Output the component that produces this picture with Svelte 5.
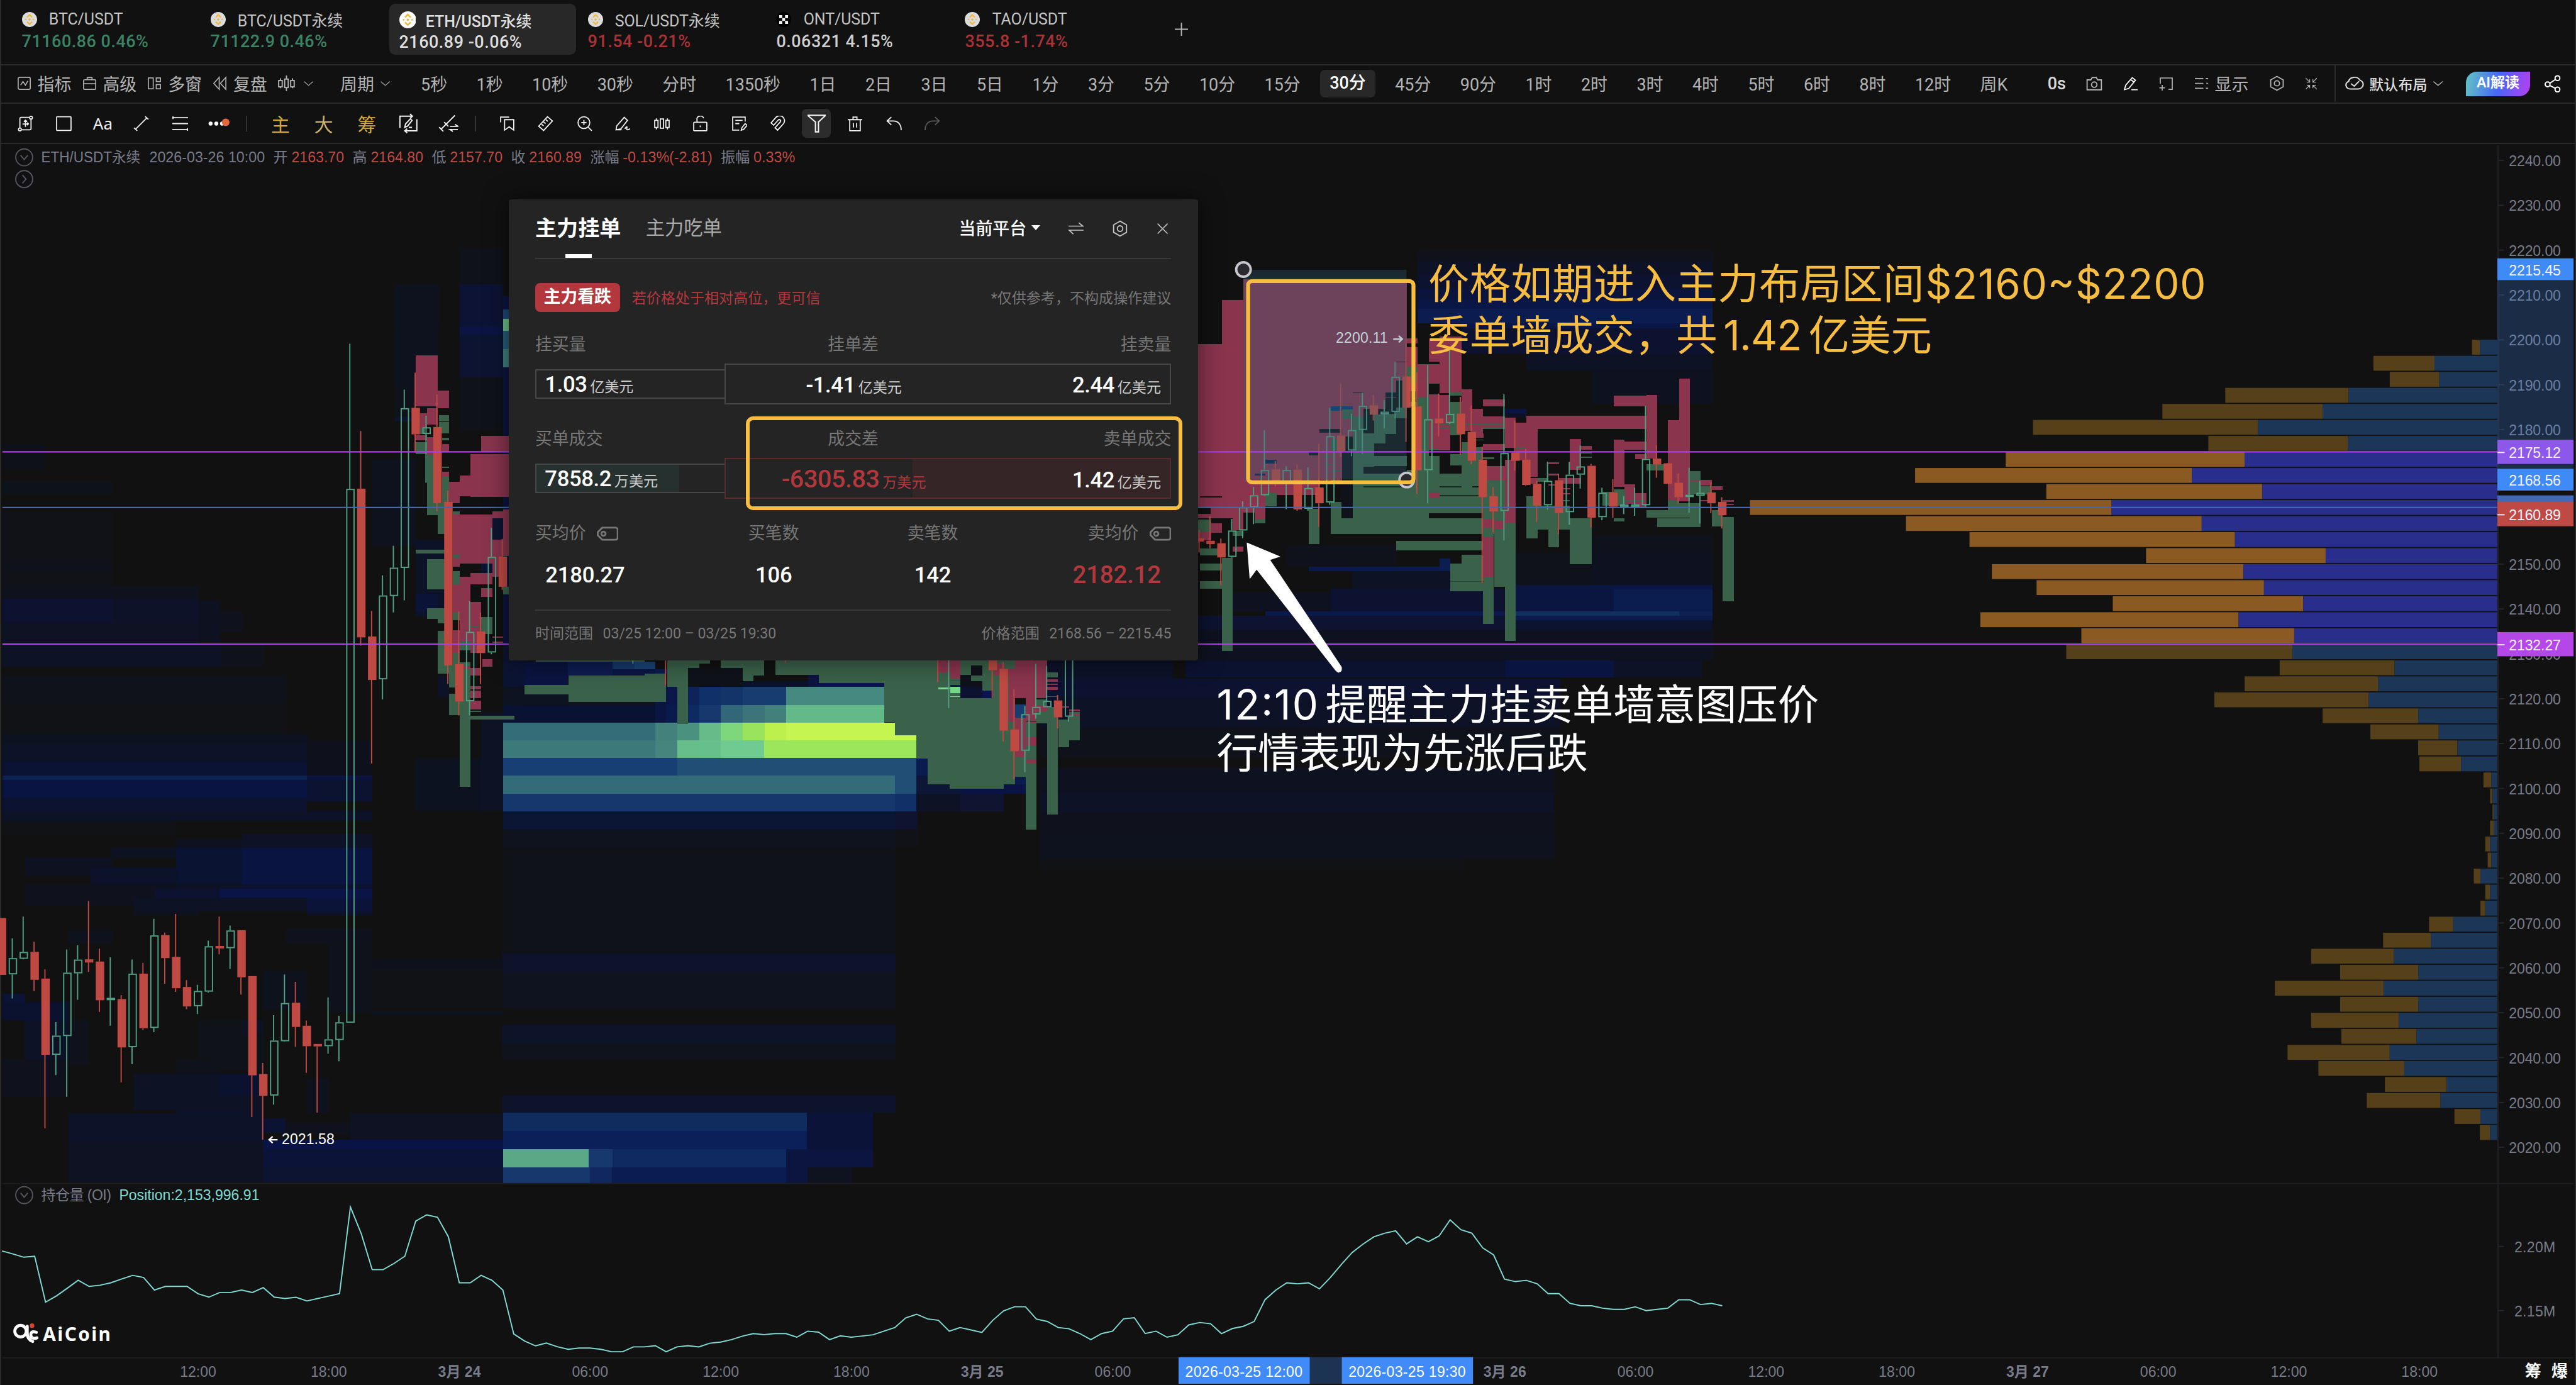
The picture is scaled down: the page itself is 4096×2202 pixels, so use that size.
<script lang="ts">
	type Rect = [number, number, number, number, string?];
	type Tile = { x: number; y: number; sx: number; sy: number; rects: Rect[] };
	type Row = [number, 0 | 1, number, number, number, number];

	const RED = '#8a344e';
	const GREEN = '#3a6149';

	const tabs = [
		{ name: 'BTC/USDT', price: '71160.86 0.46%', tone: 'up', logo: 'bnb' },
		{ name: 'BTC/USDT永续', price: '71122.9 0.46%', tone: 'up', logo: 'bnb' },
		{ name: 'ETH/USDT永续', price: '2160.89 -0.06%', tone: 'on', logo: 'bnb' },
		{ name: 'SOL/USDT永续', price: '91.54 -0.21%', tone: 'down', logo: 'bnb' },
		{ name: 'ONT/USDT', price: '0.06321 4.15%', tone: 'flat', logo: 'okx' },
		{ name: 'TAO/USDT', price: '355.8 -1.74%', tone: 'down', logo: 'bnb' }
	];

	const menus = [
		['indicator', '指标'],
		['toolbox', '高级'],
		['windows', '多窗'],
		['rewind', '复盘']
	];

	const periods =
		'5秒 1秒 10秒 30秒 分时 1350秒 1日 2日 3日 5日 1分 3分 5分 10分 15分 30分 45分 90分 1时 2时 3时 4时 5时 6时 8时 12时 周K'.split(' ');

	const drawTools = ['draw', 'square', 'aa', 'segment', 'levels', 'more'];
	const editTools = [
		'bookmark', 'ruler', 'zoomin', 'brush', 'bars', 'lock',
		'note', 'magnet', 'filter', 'trash', 'undo', 'redo'
	];

	// 24x24 stroke icons
	const icons: Record<string, string> = {
		indicator: '<rect x="2" y="2" width="20" height="20" rx="2.5"/><path d="M6 15l4-6 4 6 4-7"/>',
		toolbox: '<rect x="2" y="6" width="20" height="16" rx="1.5"/><path d="M8 6V2.5h8V6M2 12.500h20"/>',
		windows: '<rect x="2" y="3" width="8" height="18"/><rect x="15" y="3" width="7" height="6"/><rect x="15" y="14" width="7" height="7"/>',
		rewind: '<path d="M11 2L2 12l9 10zM22 2l-9 10 9 10z"/>',
		kline: '<rect x="1" y="8" width="5" height="9"/><rect x="9.500" y="6" width="5" height="12"/><rect x="18" y="8" width="5" height="9"/><path d="M3.500 5v3M3.500 17v2M12 1v5M12 18v5M20.500 5v3M20.500 17v2"/>',
		chevron: '<path d="M2 6.500l10 11 10-11"/>',
		camera: '<path d="M1.500 6.500H7L9 3h6l2 3.500h5.500V21h-21z"/><circle cx="12" cy="13.500" r="4"/>',
		pencil: '<path d="M2 21.500l2-7L14.500 2.500l5 4L9 19.500zM12 5.500l5 4M13 21.500h10"/>',
		select: '<path d="M3 12V3h19v18h-6M6 14v9M1.500 18.500h9"/>',
		list: '<path d="M1 4h14M1 12h14M1 20h14M19 4h4M20 12h3M19 20h4"/>',
		hex: '<path d="M12 1.500l9.500 5.200v10.600L12 22.500l-9.500-5.200V6.700z"/><circle cx="12" cy="12" r="4"/>',
		collapse: '<path d="M1.500 1.500l7 7M9 3.500V9H3.500M22.500 1.500l-7 7M15 3.500V9h5.500M1.500 22.500l7-7M9 20.500V15H3.500M22.500 22.500l-7-7M15 20.500V15h5.500" stroke-width="1.500"/>',
		cloud: '<path d="M7 20a5.500 5.500 0 0 1-2-10.500A7.500 7.500 0 0 1 19 7.500 6.500 6.500 0 0 1 17 20zM8 12.500l4 3.500 6-7"/>',
		share: '<circle cx="5" cy="13" r="3.300"/><circle cx="18.500" cy="4.500" r="3.300"/><circle cx="18.500" cy="20" r="3.300"/><path d="M8 11.500l7.500-5M8 14.500l7.500 4"/>',
		draw: '<path d="M17.500 2.500H5.500a2 2 0 0 0-2 2V18.500M6.500 21.500h12a2 2 0 0 0 2-2V5.500"/><circle cx="20.500" cy="3" r="2.200"/><circle cx="3.500" cy="21" r="2.200"/><path d="M12 7v10M7.500 12.500h9M9.500 9L12 6.800 14.500 9M14.500 10.500l2 2-2 2"/>',
		square: '<rect x="1" y="1.500" width="22" height="21" rx="1"/>',
		segment: '<path d="M3 21L21 3M1 18.500l5 4.500M18 1l5 4.500"/>',
		levels: '<path d="M0 3h24M0 12h24M0 21h24M1 1v4M23 19v4"/>',
		bookmark: '<path d="M2 10V2h13M8 6h14v16l-7-5-7 5z"/>',
		ruler: '<path d="M15 1.500L22.500 8 9 22.500 1.500 16zM12.500 6l3 2.500M9 9.500l3 2.500M6 13l3 2.500"/>',
		zoomin: '<circle cx="11" cy="10.500" r="9"/><path d="M17.500 17.500L23 23M7 10.500h8M11 6.500v8"/>',
		brush: '<path d="M1.500 21.500l1-6L14 2.500l5 4.500L9 20zM1.500 21.500H10M15 20c2-4 4-4 3-1s1 3 5 1"/>',
		bars: '<path d="M1 7h5v11H1zM9.500 5h5v14h-5zM18 7h5v11h-5zM3.500 4v3M3.500 18v3M20.500 4v3M20.500 18v3"/>',
		lock: '<rect x="2" y="10" width="20" height="13" rx="1"/><path d="M7 10V5a5 4 0 0 1 10-1M12 15v2.500"/>',
		note: '<path d="M12 22H2V2h19v7M6 7h11M6 12h6M15 22l1-3.500L21 12l3 2.500-5.500 6.500z"/>',
		magnet: '<path d="M2 11L9 3a7.500 7.500 0 0 1 12 9l-9 10-4-3.500 8-9a2 2 0 0 0-3-3l-7 8zM2 11l4 3.500M8 18.500l4 3"/>',
		filter: '<path d="M0 1h24L14.500 10v13h-4V10z"/>',
		trash: '<path d="M4 6v17h16V6M1 6h22M9 6V2h6v4M9.500 11v7M14.500 11v7"/>',
		undo: '<path d="M8 2L1.500 8 8 14M2 8h9c8 0 12 6 12 14"/>',
		redo: '<path d="M16 2l6.500 6-6.500 6M22 8h-9C5 8 1 14 1 22"/>',
		redraw: '<path d="M1.500 17V3.500H16M14 1l3 2.500L14 6M22.500 7v13.500H8M10.500 18l-3 2.500 3 2.500M7.500 16.500l1-4 6-6 2 2-5.500 6.500zM12.500 16.500h4" stroke-width="1.500"/>',
		measure: '<path d="M3 20L20 2M1 17l5 5.500M7 10.500l5 5.500M14 16h9.500L20 13.500M23.500 20H14l3.500 2.500" stroke-width="1.500"/>',
		swap: '<path d="M1 8.500h21L16 3M23 15H2l6 6"/>',
		close: '<path d="M3 3l18 18M21 3L3 21"/>'
	};

	const PITCH = 18.006;
	const cx = (i: number) => 21.3 + i * PITCH;
	const py = (p: number) => 265 + (2240 - p) * 7.418;

	// [slot, rising, high, body top, body bottom, low]
	function batch(y: number, k: number, rows: Row[]) {
		return rows.map(([i, up, ...v]) => {
			const [h, t, b, l] = v.map((n) => y + n / k);
			return { x: cx(i), up, h, t, b: Math.max(b, t + 4), l };
		});
	}

	const candles = [
		...batch(1340, 2.45, [
			[-1, 0, 436, 436, 666, 666], [0, 1, 518, 598, 664, 762], [1, 1, 430, 573, 601, 603], [2, 0, 532, 573, 686, 732],
			[3, 0, 643, 681, 990, 1288], [4, 1, 857, 912, 990, 1072], [5, 1, 563, 657, 914, 1160], [6, 1, 546, 604, 660, 767],
			[7, 0, 367, 603, 616, 654], [8, 0, 560, 612, 769, 816], [9, 1, 595, 759, 768, 872], [10, 0, 748, 764, 960, 1101],
			[11, 1, 604, 661, 959, 1028], [12, 0, 617, 661, 882, 889], [13, 1, 439, 506, 881, 898], [14, 0, 495, 505, 598, 702],
			[15, 0, 419, 593, 720, 735], [16, 0, 687, 715, 794, 805], [17, 1, 706, 731, 793, 825], [18, 1, 527, 550, 734, 738],
			[19, 0, 430, 549, 559, 583], [20, 1, 466, 486, 558, 642], [21, 0, 485, 485, 676, 746], [22, 0, 671, 671, 1073, 1242],
			[23, 0, 1023, 1068, 1156, 1334], [24, 1, 829, 932, 1155, 1192], [25, 1, 664, 780, 935, 937], [26, 0, 694, 779, 877, 957],
			[27, 0, 851, 872, 955, 1063], [28, 0, 946, 946, 955, 1224], [29, 1, 757, 927, 955, 985], [30, 1, 832, 858, 930, 1016],
			[31, 1, -1891, -1303, 860, 860]
		]),
		...batch(540, 1.96, [
			[32, 0, 338, 525, 1007, 1034], [33, 0, 921, 1004, 1145, 1416], [34, 1, 806, 871, 1143, 1208], [35, 1, 710, 781, 873, 926],
			[36, 1, 204, 264, 782, 887], [37, 0, 149, 263, 349, 408], [38, 1, 288, 326, 348, 506], [39, 0, 220, 325, 572, 598],
			[40, 0, 531, 568, 1098, 1158], [41, 0, 923, 1094, 1215, 1260], [42, 1, 890, 989, 1214, 1260], [43, 0, 927, 988, 1058, 1158],
			[44, 1, 652, 746, 1056, 1062], [45, 0, 688, 745, 843, 853]
		]),
		...batch(1080, 3, [
			[57, 1, 0, 0, 10, 52], [60, 0, 0, 0, 10, 160], [71, 0, 0, 0, 10, 47], [85, 0, 0, 0, 10, 143], [86, 1, 0, 0, 10, 272],
			[90, 0, 0, 0, 84, 222], [91, 0, 42, 78, 384, 437], [92, 0, 180, 378, 486, 624], [93, 1, 262, 302, 484, 590],
			[94, 1, 52, 266, 304, 324], [95, 1, 62, 236, 268, 268], [96, 0, 207, 234, 318, 373], [97, 1, -20, -20, 315, 340]
		]),
		...batch(400, 2.178, [
			[109, 0, 1037, 1067, 1079, 1118], [110, 0, 987, 1076, 1088, 1103], [111, 0, 1068, 1085, 1136, 1236], [112, 1, 997, 1039, 1134, 1137],
			[113, 1, 934, 955, 1039, 1067], [114, 1, 882, 912, 956, 1016], [115, 1, 677, 821, 912, 914], [116, 0, 788, 819, 864, 881],
			[117, 1, 808, 821, 868, 962], [118, 0, 801, 820, 963, 968], [119, 1, 812, 886, 961, 968], [120, 0, 726, 884, 941, 1026],
			[121, 1, 598, 699, 938, 946], [122, 0, 511, 697, 753, 774], [123, 1, 619, 677, 751, 771], [124, 1, 543, 590, 677, 763],
			[125, 0, 551, 588, 622, 643], [126, 1, 569, 611, 621, 672], [127, 1, 433, 485, 612, 636], [128, 0, 348, 484, 597, 720],
			[129, 0, 469, 592, 822, 908], [130, 1, 443, 638, 822, 941], [131, 0, 546, 636, 653, 700], [132, 1, 390, 619, 652, 655],
			[133, 0, 558, 618, 692, 766], [134, 0, 589, 684, 788, 800], [135, 0, 737, 784, 919, 1228], [136, 0, 883, 915, 970, 1046],
			[137, 1, 549, 760, 969, 1075], [138, 0, 643, 758, 788, 823], [139, 0, 745, 784, 875, 877], [140, 0, 860, 871, 950, 1008],
			[141, 1, 791, 860, 948, 964], [142, 0, 834, 858, 976, 1052], [143, 1, 792, 838, 973, 1018], [144, 1, 733, 808, 838, 888],
			[145, 0, 799, 806, 993, 1028], [146, 1, 885, 903, 991, 1002], [147, 0, 854, 902, 953, 994], [148, 1, 915, 945, 954, 980],
			[149, 1, 885, 945, 954, 986], [150, 1, 590, 781, 948, 953], [151, 0, 732, 780, 801, 849], [152, 0, 796, 797, 871, 871],
			[153, 0, 834, 867, 919, 942], [154, 1, 813, 910, 918, 976], [155, 1, 860, 903, 914, 1014], [156, 0, 866, 902, 941, 977],
			[157, 0, 919, 936, 984, 1032]
		])
	];

	// resting liquidity, one tile per stretch of the chart
	const heat: Tile[] = [
		{
			x: 0, y: 0, sx: 1, sy: 1,
			rects: [
				[652, 470, 74, 70, '#0e121e'], [760, 410, 72, 60, '#0f1218'], [760, 470, 72, 70, '#0c1334'],
				[1700, 1092, 240, 30, '#0c1228'], [1720, 1122, 860, 30, '#0c1230'], [1720, 1152, 860, 50, '#0d1226'],
				[1720, 1202, 860, 50, '#0f121a'], [1720, 1270, 850, 40, '#0e1220'], [1720, 1310, 850, 34, '#0d1226'],
				[1720, 1344, 850, 36, '#0f121c'], [1720, 1380, 850, 40, '#0e121e'], [1720, 1420, 700, 20, '#101216'],
				[831, 1400, 650, 180, '#10121a'], [831, 1577, 650, 30, '#0e122a'], [831, 1607, 650, 60, '#0f121f'],
				[831, 1694, 650, 30, '#0d1329'], [831, 1724, 650, 28, '#0e131c'], [831, 1811, 650, 29, '#0d132a'],
				[832, 1840, 502, 30, '#102b5e'], [832, 1870, 502, 30, '#0b2058'], [1334, 1840, 110, 60, '#0b1338'],
				[973, 1900, 40, 30, '#16386c'], [1013, 1900, 287, 30, '#0e2a60'], [1300, 1900, 144, 30, '#0b1540'],
				[832, 1930, 144, 26, '#16386c'], [976, 1930, 36, 26, '#10285f'], [1012, 1930, 288, 26, '#0b1c52'],
				[1300, 1930, 35, 26, '#0b1540'], [1335, 1930, 74, 26, '#0f131f'], [832, 1900, 141, 30, '#5ba886']
			]
		},
		{
			x: 0, y: 540, sx: 1.823, sy: 1.96,
			rects: [
				[7, 380, 130, 82, '#0e1119'], [7, 500, 330, 43, '#0e121b'], [7, 600, 330, 240, '#101218'], [7, 765, 330, 30, '#0f121a'],
				[7, 840, 592, 45, '#0f121c'], [7, 882, 330, 77, '#0c1230'], [337, 882, 262, 77, '#0d1228'], [599, 885, 65, 140, '#0e1220'],
				[664, 925, 68, 65, '#0f121c'], [7, 959, 592, 70, '#0e1222'], [7, 1030, 660, 72, '#0d1226'], [667, 1030, 128, 72, '#0f121a'],
				[7, 1130, 855, 90, '#0f121b'], [7, 1220, 855, 100, '#101216'], [7, 1320, 920, 30, '#0d1220'], [7, 1350, 920, 60, '#0c1228'],
				[7, 1410, 920, 45, '#0b1334'], [7, 1454, 919, 15, '#0c2150'], [926, 1454, 197, 15, '#0b1340'], [7, 1469, 919, 58, '#0a1442'],
				[926, 1340, 197, 114, '#0e111c'], [926, 1469, 197, 70, '#0b1330'], [7, 1527, 919, 42, '#0c1330'], [1190, 0, 132, 205, '#0e121e'],
				[1190, 205, 132, 88, '#0f121a'], [1190, 293, 132, 15, '#0d1430'], [1122, 430, 132, 280, '#0e121e'], [1386, 0, 132, 25, '#0b1444'],
				[1386, 25, 132, 140, '#0c1432'], [1386, 165, 132, 170, '#0f1218'], [1254, 690, 100, 250, '#0c1228'], [1254, 865, 66, 60, '#0b1336'],
				[1484, 620, 33, 180, '#0d1430'], [1451, 760, 33, 70, '#0c1434'], [1320, 1130, 33, 70, '#0d1226'], [1254, 1400, 263, 168, '#0d1220'],
				[1451, 1250, 66, 318, '#0d1224'], [1517, 131, 16, 900, '#0b1440'], [1517, 1030, 51, 130, '#0c1430'], [1517, 1160, 51, 66, '#0d1322'],
				[1517, 1226, 51, 57, '#0b1444'], [1517, -100, 16, 100, '#0b1440'], [1517, -56, 16, 30, '#1d4a78'], [1517, -26, 16, 40, '#6ac085'],
				[1517, 14, 16, 58, '#285c7a'], [1517, 72, 16, 59, '#3f7f7c']
			]
		},
		{
			x: 0, y: 1340, sx: 1.742, sy: 2.45,
			rects: [
				[7, 0, 1066, 41, '#0c1228'], [7, 41, 500, 60, '#101216'], [697, 95, 376, 57, '#0d1226'], [507, 115, 190, 40, '#0e1220'],
				[320, 152, 187, 40, '#0d1222'], [507, 152, 190, 145, '#0b1332'], [697, 152, 376, 147, '#0a1440'], [72, 190, 250, 75, '#0e1220'],
				[260, 230, 250, 70, '#0c122a'], [70, 300, 440, 87, '#0f121c'], [507, 297, 190, 19, '#0d1224'], [697, 299, 376, 17, '#0b1230'],
				[445, 316, 190, 38, '#0c1230'], [634, 316, 439, 38, '#0a1446'],
				[385, 354, 500, 55, '#0d1224'], [885, 354, 188, 55, '#0b133a'], [385, 409, 185, 18, '#0f121c'], [885, 409, 188, 18, '#0d1228'],
				[822, 480, 251, 60, '#0f121c'], [948, 540, 125, 280, '#0f121a'], [197, 485, 125, 55, '#0e121c'], [7, 742, 65, 35, '#0b1336'],
				[7, 777, 190, 73, '#0b1230'], [70, 850, 127, 160, '#0d1226'], [197, 850, 60, 180, '#0f121a'], [7, 1010, 190, 150, '#0f121c'],
				[1073, 600, 377, 40, '#0e111c'], [1073, 640, 377, 160, '#101216'], [1073, 812, 377, 20, '#0e1320'], [570, 850, 190, 200, '#0f1218'],
				[697, 850, 62, 60, '#0e1224'], [760, 650, 125, 160, '#0e121c'], [507, 1010, 125, 60, '#0f121a'], [385, 1065, 375, 150, '#0d1224'],
				[632, 1065, 128, 90, '#0b1230'], [197, 1228, 310, 110, '#0c1228'], [507, 1215, 253, 123, '#0c1228'], [197, 1338, 563, 170, '#0e1222'],
				[885, 1085, 63, 143, '#0f121c'], [760, 1246, 62, 60, '#0c1332'], [822, 1265, 186, 45, '#0f121c'], [1010, 1228, 440, 106, '#0e1222'],
				[760, 1334, 690, 38, '#0a1444'], [760, 1372, 690, 70, '#0b1438'], [760, 1442, 690, 66, '#0c1432'], [1450, 75, 118, 75, '#0e131e']
			]
		},
		{
			x: 820, y: 1080, sx: 1.568, sy: 3,
			rects: [
				[19, 36, 56, 132, '#0c1434'], [75, 42, 112, 120, '#0b1440'], [187, 42, 115, 70, '#0d1c50'], [302, 42, 57, 36, '#15376c'],
				[359, 42, 55, 36, '#1a4477'], [302, 78, 112, 33, '#0b1745'], [414, 78, 30, 24, '#0b1d50'], [19, 168, 170, 87, '#0e1322'],
				[188, 242, 226, 14, '#0f131e'], [442, 168, 28, 88, '#0a1748'], [499, 168, 28, 88, '#0d235a'], [527, 168, 56, 88, '#10306a'],
				[583, 168, 57, 88, '#133469'], [640, 168, 113, 88, '#173c70'], [753, 168, 255, 88, '#458980'], [19, 256, 395, 88, '#0a1234'],
				[414, 242, 28, 102, '#0a1542'], [442, 256, 28, 88, '#0b1a4c'], [499, 256, 28, 88, '#0e2a62'], [527, 256, 56, 88, '#16386c'],
				[583, 256, 57, 88, '#326779'], [640, 256, 57, 88, '#3d7479'], [697, 256, 56, 88, '#42807c'], [753, 256, 254, 88, '#63b988'],
				[19, 344, 395, 88, '#346c78'], [414, 344, 56, 88, '#43827c'], [470, 344, 57, 88, '#4a927f'], [527, 344, 56, 88, '#66bb88'],
				[583, 344, 57, 88, '#7fd77c'], [640, 344, 57, 88, '#99e45c'], [697, 344, 56, 88, '#bdf04c'], [753, 344, 282, 88, '#c5f551'],
				[1035, 408, 56, 24, '#c5f551'], [19, 432, 395, 88, '#3c797a'], [414, 432, 56, 88, '#45857d'], [470, 432, 57, 88, '#67be8a'],
				[527, 432, 56, 88, '#66c08c'], [583, 432, 113, 88, '#70cb90'], [696, 432, 395, 88, '#9ce65c'], [19, 520, 451, 88, '#183f73'],
				[470, 520, 621, 88, '#204e75'], [1091, 520, 29, 88, '#0a1b50'], [19, 608, 1016, 88, '#336c78'], [1035, 608, 56, 88, '#204e75'],
				[1091, 608, 114, 88, '#0c1636'], [1205, 650, 170, 46, '#0a1444'], [1346, 607, 28, 43, '#0a1a50'], [19, 696, 1016, 88, '#15376c'],
				[1035, 696, 56, 88, '#123068'], [1091, 696, 114, 88, '#0d1324'], [1205, 696, 112, 88, '#0f1430'], [19, 784, 1016, 90, '#0a1634'],
				[1035, 784, 58, 90, '#0f1330'], [19, 874, 1016, 86, '#0f131e'], [1035, 874, 60, 86, '#101218'], [1096, 784, 278, 176, '#111'],
				[1317, 696, 57, 88, '#111'], [640, 140, 200, 28, '#0c122c'],
				[499, 72, 141, 96, '#10121a'], [809, 108, 28, 60, '#0b1340'], [837, 148, 170, 20, '#0b1450']
			]
		},
		{
			x: 1960, y: 400, sx: 1.6505, sy: 2.178,
			rects: [
				[635, 28, 805, 40, '#0f121a'], [635, 68, 805, 50, '#0d1226'], [635, 118, 805, 50, '#0c1230'], [635, 168, 805, 42, '#0a143c'],
				[635, 210, 805, 30, '#0a1746'], [635, 240, 805, 52, '#0b1c50'], [754, 292, 686, 20, '#0a1645'], [754, 312, 686, 90, '#0c1230'],
				[932, 402, 508, 60, '#0d1224'], [1110, 462, 330, 121, '#0e1220'], [872, 600, 60, 16, '#0a1442'], [872, 616, 60, 16, '#0d1224'],
				[1110, 1055, 330, 65, '#0f121a'], [1110, 1120, 330, 115, '#0e1220'],
				[902, 1120, 208, 115, '#0f121a'], [278, 1090, 300, 80, '#0f121a'], [338, 1170, 386, 16, '#0b1a4a'], [457, 1186, 267, 62, '#0d1224'],
				[694, 1140, 30, 44, '#0b1e50'], [398, 1248, 505, 82, '#0c1230'], [100, 1262, 298, 68, '#0e1220'], [902, 1235, 268, 95, '#0a1540'],
				[1170, 1235, 270, 15, '#0a1646'], [1170, 1250, 270, 80, '#0b1c4e'], [902, 1330, 446, 17, '#12305f'], [1348, 1330, 92, 17, '#0d2152'],
				[219, 1330, 683, 17, '#0b184a'], [35, 1347, 867, 50, '#0d1330'], [902, 1347, 538, 15, '#0b1b4c'], [902, 1362, 538, 35, '#0c1330'],
				[35, 1397, 1405, 110, '#0e1220'], [872, 1507, 298, 61, '#0a1440'], [0, 1507, 872, 61, '#0b1230'], [1170, 1507, 240, 61, '#0d1226']
			]
		}
	];

	// filled / pulled large orders
	const walls: Tile[] = [
		{
			x: 0, y: 540, sx: 1.823, sy: 1.96,
			rects: [
				[1254, 93, 66, 165, RED], [1320, 208, 33, 57, RED], [1287, 264, 33, 53, RED], [1267, 280, 20, 50, RED], [1254, 352, 33, 16, RED],
				[1287, 357, 33, 60, RED], [1333, 380, 20, 25, RED], [1333, 470, 20, 16, RED], [1353, 502, 33, 70, RED], [1386, 482, 32, 68, RED],
				[1418, 414, 115, 137, RED], [1451, 353, 82, 51, RED], [1366, 609, 118, 158, RED], [1484, 598, 33, 24, RED], [1517, 593, 16, 150, RED],
				[1484, 690, 33, 120, RED], [1366, 752, 20, 26, RED], [1386, 810, 32, 210, RED], [1366, 835, 20, 92, RED], [1418, 798, 66, 37, RED],
				[1451, 848, 33, 27, RED], [1418, 893, 33, 164, RED], [1366, 984, 20, 74, RED], [1484, 1004, 33, 4, RED], [1484, 1021, 33, 4, RED],
				[1454, 1078, 30, 24, RED], [1418, 1107, 33, 24, RED], [1418, 1166, 33, 10, RED], [1418, 1180, 33, 23, RED], [1418, 1212, 33, 29, RED],
				[1254, 374, 33, 40, GREEN], [1267, 330, 20, 18, GREEN], [1324, 287, 29, 20, GREEN], [1324, 310, 29, 35, GREEN], [1333, 360, 20, 8, GREEN],
				[1333, 453, 20, 4, GREEN], [1287, 417, 33, 193, GREEN], [1333, 486, 20, 186, GREEN], [1320, 572, 33, 100, GREEN], [1366, 598, 20, 11, GREEN],
				[1254, 723, 99, 13, GREEN], [1287, 753, 66, 98, GREEN], [1366, 739, 20, 13, GREEN], [1366, 793, 20, 43, GREEN], [1287, 912, 60, 36, GREEN],
				[1320, 948, 30, 14, GREEN], [1366, 927, 20, 25, GREEN], [1320, 985, 33, 140, GREEN], [1366, 1058, 20, 112, GREEN], [1353, 1098, 13, 72, GREEN],
				[1353, 1189, 33, 71, GREEN], [1386, 1087, 32, 405, GREEN], [1386, 1021, 32, 28, GREEN], [1451, 942, 33, 55, GREEN], [1418, 970, 33, 4, GREEN],
				[1418, 1244, 33, 5, GREEN], [1418, 1262, 132, 12, GREEN], [1398, 1100, 20, 10, RED], [1517, 843, 16, 24, GREEN]
			]
		},
		{
			x: 820, y: 1080, sx: 1.568, sy: 3,
			rects: [
				[103, 36, 283, 6, GREEN], [75, 156, 113, 48, GREEN], [188, 111, 254, 131, GREEN], [386, 100, 56, 40, GREEN], [444, 36, 55, 132, GREEN],
				[470, 168, 29, 183, GREEN], [499, 36, 28, 36, GREEN], [527, 36, 28, 15, GREEN], [583, 36, 58, 36, GREEN], [641, 36, 27, 102, GREEN],
				[668, 36, 28, 76, GREEN], [725, 36, 112, 72, GREEN], [837, 36, 170, 112, GREEN], [1007, 36, 28, 304, GREEN], [1035, 36, 56, 372, GREEN],
				[1091, 36, 29, 485, GREEN], [1120, 36, 56, 614, GREEN], [1176, 36, 141, 636, GREEN], [1317, 36, 29, 614, GREEN], [1346, 320, 28, 293, GREEN],
				[1374, 340, 28, 535, GREEN], [1402, 228, 28, 121, GREEN], [1430, 268, 28, 532, GREEN], [1459, 328, 28, 139, GREEN], [1487, 290, 28, 142, GREEN],
				[1430, 96, 28, 25, GREEN], [1430, 212, 28, 5, GREEN], [1148, 36, 30, 58, RED], [1178, 36, 27, 90, RED], [1292, 52, 26, 60, RED],
				[1317, 76, 29, 36, RED], [1330, 112, 16, 230, RED], [1346, 36, 84, 186, RED], [1374, 222, 28, 112, RED], [1346, 320, 28, 194, RED],
				[1376, 414, 26, 42, RED], [1376, 527, 26, 18, RED], [1374, 339, 28, 6, RED], [1430, 128, 28, 15, RED], [1430, 152, 28, 6, RED],
				[1430, 168, 28, 15, RED], [1402, 258, 28, 30, RED], [1466, 264, 20, 6, RED], [1487, 279, 28, 10, RED], [1487, 305, 28, 6, RED],
				[1346, 222, 28, 33, '#111'], [1346, 255, 28, 66, '#163c70'], [1205, 106, 27, 62, '#10121a'], [1232, 60, 29, 52, '#10121a'],
				[1232, 140, 29, 28, '#10121a'], [1205, 168, 56, 54, '#0c1230'], [1261, 186, 28, 36, '#0a1450'], [1178, 131, 27, 4, '#1d4a78'],
				[1178, 158, 27, 9, '#0a1c55'], [1148, 170, 28, 8, '#72d68b'], [1178, 168, 27, 30, '#72d68b'], [1178, 212, 27, 5, '#72d68b']
			]
		},
		{
			x: 1960, y: 400, sx: 1.6505, sy: 2.178,
			rects: [
				[35, 367, 65, 590, RED], [100, 208, 59, 787, RED], [35, 978, 35, 17, RED], [70, 957, 30, 38, RED], [70, 1014, 30, 34, RED],
				[130, 995, 29, 43, RED], [159, 134, 446, 366, RED], [159, 500, 416, 60, RED], [159, 560, 387, 40, RED], [159, 600, 327, 40, RED],
				[159, 640, 298, 60, RED], [159, 700, 239, 60, RED], [159, 760, 239, 96, RED], [159, 856, 60, 118, RED], [189, 974, 30, 28, RED],
				[219, 856, 150, 55, RED], [130, 1098, 29, 16, RED], [35, 1042, 36, 32, RED], [398, 700, 30, 160, RED],
				[605, 348, 30, 100, RED], [635, 440, 60, 120, RED], [665, 348, 89, 82, RED], [694, 340, 60, 205, RED],
				[665, 550, 59, 200, RED], [754, 530, 30, 150, RED], [784, 601, 29, 90, RED], [813, 566, 59, 25, RED], [813, 629, 59, 44, RED],
				[813, 727, 60, 23, RED], [872, 632, 30, 110, RED], [872, 785, 30, 227, RED], [902, 651, 31, 135, RED], [932, 625, 357, 48, RED],
				[932, 673, 30, 172, RED], [1259, 552, 30, 228, RED], [1170, 553, 90, 38, RED], [1050, 710, 30, 110, RED], [1080, 735, 30, 14, RED],
				[1170, 712, 29, 170, RED], [1199, 719, 60, 30, RED], [1229, 764, 30, 17, RED], [1318, 641, 30, 160, RED], [1348, 493, 30, 440, RED],
				[1318, 800, 30, 130, RED], [1199, 872, 30, 70, RED], [1229, 905, 30, 50, RED], [813, 808, 60, 55, RED], [992, 793, 29, 8, RED],
				[992, 835, 29, 6, RED], [1021, 850, 60, 20, RED], [932, 850, 30, 20, RED], [1021, 886, 30, 5, RED], [1021, 905, 30, 4, RED],
				[1407, 857, 30, 20, RED], [1437, 880, 30, 14, RED], [1467, 930, 30, 6, RED], [1467, 943, 30, 5, RED], [1467, 1006, 30, 6, RED],
				[784, 690, 30, 14, RED],
				[398, 996, 474, 56, GREEN], [457, 835, 208, 161, GREEN], [665, 835, 148, 142, GREEN], [605, 448, 30, 60, GREEN], [635, 560, 30, 275, GREEN],
				[605, 820, 60, 20, GREEN], [665, 770, 29, 65, GREEN], [724, 577, 30, 118, GREEN], [724, 765, 30, 40, GREEN], [754, 722, 30, 114, GREEN],
				[784, 740, 29, 100, GREEN], [724, 543, 30, 10, GREEN], [813, 860, 30, 140, GREEN], [843, 858, 29, 145, GREEN], [398, 935, 29, 62, GREEN],
				[338, 960, 29, 128, GREEN], [219, 905, 30, 46, GREEN], [189, 1000, 30, 13, GREEN], [872, 1012, 30, 425, GREEN], [813, 1029, 29, 346, GREEN],
				[843, 1033, 30, 210, GREEN], [575, 1077, 238, 34, GREEN], [754, 1126, 60, 31, GREEN], [724, 1158, 90, 99, GREEN], [932, 915, 30, 152, GREEN],
				[962, 950, 88, 85, GREEN], [992, 1035, 29, 65, GREEN], [1050, 995, 60, 166, GREEN], [962, 850, 30, 14, GREEN], [962, 950, 30, 14, GREEN],
				[1170, 890, 30, 60, GREEN], [1170, 995, 29, 12, GREEN], [1259, 965, 119, 28, GREEN], [1289, 996, 118, 30, GREEN], [1259, 800, 60, 22, GREEN],
				[1318, 930, 30, 40, GREEN], [1348, 940, 30, 30, GREEN], [1378, 825, 29, 85, GREEN], [1378, 940, 29, 54, GREEN], [1407, 880, 30, 30, GREEN],
				[1437, 965, 30, 60, GREEN], [1467, 990, 30, 305, GREEN], [100, 1137, 29, 335, GREEN], [41, 1103, 59, 26, GREEN], [41, 1158, 59, 26, GREEN],
				[41, 1222, 59, 26, GREEN], [35, 1000, 36, 42, GREEN], [1080, 755, 30, 6, GREEN], [1080, 772, 30, 5, GREEN], [130, 1040, 29, 18, GREEN],
				[1139, 900, 30, 50, GREEN], [813, 1062, 29, 143, RED], [813, 1000, 29, 29, RED], [843, 1003, 29, 30, RED], [843, 820, 30, 38, RED],
				[665, 903, 29, 20, RED], [398, 592, 59, 16, '#0b3a7a'], [428, 604, 29, 32, GREEN], [457, 628, 29, 230, GREEN], [486, 690, 30, 120, GREEN],
				[516, 622, 30, 103, GREEN], [546, 620, 29, 72, GREEN], [575, 596, 30, 38, GREEN], [516, 770, 89, 36, GREEN], [367, 673, 60, 14, '#10121a'],
				[338, 758, 29, 10, '#10121a'], [428, 756, 29, 240, '#10121a'], [546, 543, 29, 14, '#0c1220'], [219, 785, 30, 12, '#0b1f50'],
				[189, 835, 30, 6, '#0b1f50'], [41, 915, 59, 6, '#111'], [457, 543, 30, 2, '#111'], [575, 430, 30, 3, '#111'], [784, 880, 29, 4, '#0e1a18'],
				[486, 880, 120, 3, '#1a2c24'], [694, 912, 119, 3, '#1a2c24'], [694, 880, 60, 3, '#1a2c24'], [724, 1222, 90, 2, '#2b4a38'],
				[665, 430, 29, 9, '#111'], [665, 510, 29, 38, '#111'], [605, 366, 30, 13, '#111'], [635, 503, 30, 3, GREEN], [605, 508, 30, 30, RED],
				[605, 576, 30, 16, GREEN], [398, 710, 29, 40, GREEN], [378, 770, 20, 6, GREEN], [378, 800, 20, 5, GREEN], [398, 820, 29, 5, GREEN],
				[754, 655, 59, 5, GREEN], [784, 711, 29, 3, GREEN], [813, 656, 59, 3, GREEN], [813, 668, 59, 3, GREEN], [694, 655, 30, 4, GREEN],
				[694, 668, 60, 4, GREEN], [665, 745, 29, 4, GREEN], [902, 738, 30, 8, GREEN], [813, 775, 30, 6, GREEN], [992, 872, 29, 5, RED],
				[1021, 930, 29, 4, GREEN], [1139, 924, 30, 4, RED], [1199, 930, 60, 4, GREEN], [1378, 856, 29, 5, RED], [1407, 930, 30, 4, RED]
			]
		}
	];

	// [total, sell share], widths in px from the price axis
	const profile = [
		[42, 29], [205, 104], [178, 96], [450, 246], [554, 289], [768, 396], [478, 247], [813, 418], [963, 505], [746, 389],
		[1236, 638], [978, 489], [873, 434], [581, 284], [836, 420], [762, 386], [636, 321], [855, 428], [688, 336], [713, 339],
		[360, 170], [418, 197], [468, 213], [289, 131], [210, 97], [131, 66], [129, 60], [23, 10], [12, 8], [8, 6],
		[12, 6], [20, 12], [16, 10], [39, 28], [20, 12], [28, 20], [113, 73], [189, 110], [308, 171], [260, 131],
		[368, 188], [260, 131], [308, 163], [258, 134], [347, 178], [296, 154], [186, 84], [216, 94], [71, 28], [29, 12]
	];
	const inValueArea = (i: number) => i > 6 && i < 19;

	const openInterest = [
		385, 400, 416, 411, 639, 608, 570, 530, 561, 555, 543, 524, 506, 517, 579, 561, 561, 561, 597, 614, 591, 591, 579, 591,
		567, 614, 621, 615, 633, 621, 609, 597, 167, 300, 478, 478, 447, 411, 237, 206, 218, 315, 543, 543, 506, 531, 579, 797,
		832, 856, 842, 860, 873, 867, 867, 873, 885, 885, 861, 861, 855, 885, 861, 855, 861, 843, 837, 825, 808, 795, 800, 795,
		795, 813, 783, 788, 825, 806, 813, 807, 801, 783, 765, 717, 699, 722, 729, 783, 765, 777, 789, 729, 682, 662, 662, 723,
		735, 765, 771, 795, 825, 795, 783, 722, 716, 795, 783, 813, 801, 752, 740, 746, 795, 770, 759, 735, 627, 579, 543, 548,
		543, 573, 517, 453, 393, 351, 315, 297, 285, 350, 315, 339, 310, 231, 280, 297, 370, 405, 525, 537, 531, 548, 597, 597,
		645, 657, 657, 669, 675, 675, 662, 681, 675, 669, 627, 627, 651, 645, 657
	];
	const oiLine = openInterest.map((v, i) => `${cx(i - 1).toFixed(1)},${(1940 + v / 3).toFixed(1)}`).join(' ');

	const prices = Array.from({ length: 23 }, (_, i) => 2240 - i * 10);
	const times = [
		'12:00', '18:00', '3月 24', '06:00', '12:00', '18:00', '3月 25', '06:00', '', '',
		'3月 26', '06:00', '12:00', '18:00', '3月 27', '06:00', '12:00', '18:00'
	];

	const tags = [
		{ y: 427, h: 36, fill: '#3e8bf8', text: '2215.45', tick: false },
		{ y: 727, h: 40, fill: '#8d58ea', text: '2175.12', tick: true },
		{ y: 775, h: 36, fill: '#3e8bf8', text: '2168.56', tick: false },
		{ y: 830, h: 40, fill: '#bf4a43', text: '2160.89', tick: true },
		{ y: 1045, h: 40, fill: '#b547e8', text: '2132.27', tick: true }
	];

	// [x, width, text, is value]
	const legend: [number, number, string, boolean][] = [
		[68, 164, 'ETH/USDT永续', false], [247, 191, '2026-03-26 10:00', false],
		[452, 24, '开', false], [482, 87, '2163.70', true], [583, 24, '高', false], [613, 87, '2164.80', true],
		[714, 24, '低', false], [744, 87, '2157.70', true], [845, 24, '收', false], [875, 87, '2160.89', true],
		[976, 48, '涨幅', false], [1030, 148, '-0.13%(-2.81)', true], [1192, 48, '振幅', false], [1246, 69, '0.33%', true]
	];
</script>

{#snippet icon(name: string, size: number, height = size)}
	<svg
		class="icon"
		style="width: {size}px; height: {height}px"
		viewBox="0 0 24 24"
		preserveAspectRatio="none"
		fill="none"
		stroke="currentColor"
		stroke-width="1.7"
	>
		{@html icons[name]}
	</svg>
{/snippet}

{#snippet tile(t: Tile)}
	<g transform="translate({t.x} {t.y}) scale({1 / t.sx} {1 / t.sy})" shape-rendering="crispEdges">
		{#each t.rects as [x, y, w, h, fill]}
			<rect {x} {y} width={w} height={h} {fill} />
		{/each}
	</g>
{/snippet}

{#snippet tagIcon()}
	<svg class="price-tag" viewBox="0 0 37 24">
		<path d="M10 2h22a3.500 3.500 0 0 1 3.500 3.500v13A3.500 3.500 0 0 1 32 22H10L2.500 14.500v-5z" />
		<circle cx="12" cy="12" r="3.500" />
	</svg>
{/snippet}

<div class="app">
	<header class="tabs">
		{#each tabs as tab}
			<div class="tab" class:active={tab.tone === 'on'}>
				<div class="pair">
					<svg class="logo" viewBox="0 0 24 24">
						{#if tab.logo === 'bnb'}
							<circle cx="12" cy="12" r="12" fill={tab.tone === 'on' ? '#fff' : '#dcdcdc'} />
							<g fill="none" stroke="#efb83c" stroke-width="2.2">
								<path d="M8 8.500l4-4 4 4M8 15.500l4 4 4-4" />
							</g>
							<path d="M12 9.800l2.200 2.200-2.200 2.200L9.800 12zM6 10.400L7.600 12 6 13.600 4.400 12zM18 10.400l1.600 1.600-1.600 1.600-1.600-1.600z" fill="#efb83c" />
						{:else}
							<circle cx="12" cy="12" r="12" fill="#000" />
							<path d="M5 5h4.700v4.700H5zM14.300 5H19v4.700h-4.700zM9.700 9.700h4.600v4.600H9.700zM5 14.300h4.700V19H5zM14.300 14.300H19V19h-4.700z" fill="#fff" />
						{/if}
					</svg>
					<span>{tab.name}</span>
				</div>
				<div class="quote {tab.tone}">{tab.price}</div>
			</div>
		{/each}
		<svg class="plus" viewBox="0 0 22 22"><path d="M11 0v22M0 11h22" /></svg>
	</header>

	<nav class="periods">
		<div class="menus">
			{#each menus as [name, label]}
				<div class="menu">{@render icon(name, 24)}<span>{label}</span></div>
			{/each}
			<div class="menu kline">{@render icon('kline', 28)}{@render icon('chevron', 18, 14)}</div>
			<div class="menu cycle"><span>周期</span>{@render icon('chevron', 18, 14)}</div>
		</div>
		<div class="list">
			{#each periods as p}
				<span class:current={p === '30分'}>{p}</span>
			{/each}
		</div>
		<div class="actions">
			<b>0s</b>
			{@render icon('camera', 27)}
			<span class="bright">{@render icon('pencil', 25)}</span>
			{@render icon('select', 25)}
			<div class="menu">{@render icon('list', 24)}<span>显示</span></div>
			{@render icon('hex', 26)}
			{@render icon('collapse', 21)}
		</div>
		<div class="layout">
			{@render icon('cloud', 32, 28)}<span>默认布局</span>{@render icon('chevron', 18, 14)}
			<div class="ai">AI解读</div>
			<span class="bright">{@render icon('share', 29)}</span>
		</div>
	</nav>

	<div class="tools">
		<div class="group first">
			{#each drawTools as t}
				<div class="tool">
					{#if t === 'aa'}
						<span class="aa">Aa</span>
					{:else if t === 'more'}
						<svg class="dots" viewBox="0 0 38 26">
							<circle cx="4" cy="13" r="3.300" fill="#fff" />
							<circle cx="13.500" cy="13" r="3.300" fill="#fff" />
							<circle cx="23" cy="13" r="3.300" fill="#fff" />
							<circle cx="29" cy="11" r="6.300" fill="#e5673b" />
						</svg>
					{:else}
						{@render icon(t, 26)}
					{/if}
				</div>
			{/each}
		</div>
		<i class="bar"></i>
		<div class="group marks">
			<span>主</span><span class="pale">大</span><span>筹</span>
			<div class="tool">{@render icon('redraw', 32, 34)}</div>
			<div class="tool">{@render icon('measure', 33, 31)}</div>
		</div>
		<i class="bar second"></i>
		<div class="group">
			{#each editTools as t}
				<div class="tool" class:pressed={t === 'filter'} class:off={t === 'redo'}>{@render icon(t, t === 'filter' ? 30 : 26)}</div>
			{/each}
		</div>
	</div>

	<main class="chart">
		<svg class="canvas" viewBox="0 238 4260 2052">
			{#each heat as t}{@render tile(t)}{/each}
			{#each walls as t}{@render tile(t)}{/each}

			{#each candles as c}
				<g class={c.up ? 'up' : 'down'}>
					<path class="wick" d="M{c.x - 1} {c.h}V{c.t}M{c.x - 1} {c.b}V{Math.max(c.l, c.b)}" />
					{#if c.up}
						<rect class="body" x={c.x - 6} y={c.t + 1} width="12" height={c.b - c.t - 2} />
					{:else}
						<rect class="body" x={c.x - 7} y={c.t} width="14" height={c.b - c.t} />
					{/if}
				</g>
			{/each}

			<rect x="2056" y="446" width="270" height="347" fill="rgba(51, 95, 117, 0.32)" />

			{#each profile as [total, part], i}
				<rect x={4130 - total} y={561.7 + i * 26.5} width={total - part} height="24.600" fill={inValueArea(i) ? '#8a5a22' : '#55401a'} />
				<rect x={4130 - part} y={561.7 + i * 26.5} width={part} height="24.600" fill={inValueArea(i) ? '#292d8b' : '#1b3657'} />
			{/each}

			<path d="M4 747H4130M4 1065H4130" stroke="#a942df" stroke-width="2.200" />
			<path d="M4 839H4130" stroke="#3f69b5" stroke-width="2.200" />

			<g class="label">
				<text x="2209" y="567" fill="#c3d2d8" textLength="86">2200.11</text>
				<path d="M2304 560.500h15M2313 555l6 5.500-6 5.500" stroke="#c3d2d8" fill="none" stroke-width="2.400" />
				<text x="466" y="1892" fill="#fff" textLength="87">2021.58</text>
				<path d="M459 1884.500h-14M451 1879l-6 5.500 6 5.500" stroke="#fff" fill="none" stroke-width="2.400" />
			</g>

			<g fill="#2a2a30" stroke="#c6c6cc" stroke-width="4">
				<circle cx="2056.300" cy="445.500" r="12" />
				<circle cx="2326.300" cy="793.500" r="12" />
			</g>
			<rect x="2064" y="464.500" width="273.500" height="333" rx="7" fill="none" stroke="#f6bd40" stroke-width="6.500" />

			<g class="note" fill="#f6bd40">
				<text x="2362" y="494" textLength="820">价格如期进入主力布局区间</text>
				<text x="3184" y="494" textLength="464">$2160~$2200</text>
				<text x="2362" y="579" textLength="478">委单墙成交，共</text>
				<text x="2850" y="579" textLength="130">1.42</text>
				<text x="2991" y="579" textLength="204">亿美元</text>
			</g>
			<g class="note" fill="#fff">
				<text x="2012" y="1190" textLength="168">12:10</text>
				<text x="2192" y="1190" textLength="816">提醒主力挂卖单墙意图压价</text>
				<text x="2012" y="1270" textLength="614">行情表现为先涨后跌</text>
			</g>
			<path
				transform="translate(1960 400) scale(0.6059 0.4591)"
				d="M168 1082L260 1133L232 1145L427 1530Q430 1550 418 1551Q412 1548 408 1540L195 1180L176 1214z"
				fill="#fff"
			/>

			<!-- legend -->
			<g fill="none" stroke="#55565e" stroke-width="2">
				<circle cx="40" cy="260" r="14" /><path d="M34 256.500l6 7 6-7" />
				<circle cx="40" cy="296" r="14" /><path d="M37 289l6 7-6 7" />
				<circle cx="40" cy="1976" r="14" /><path d="M34 1972.500l6 7 6-7" />
			</g>
			<g class="label">
				{#each legend as [x, w, text, value]}
					<text {x} y="268.500" textLength={w} lengthAdjust="spacingAndGlyphs" fill={value ? '#bf4a43' : '#787b89'}>{text}</text>
				{/each}
				<text x="68" y="1984.500" textLength="116" fill="#787b89">持仓量 (OI)</text>
				<text x="197" y="1984.500" textLength="232" fill="#7fdbd3">Position:2,153,996.91</text>
			</g>

			<!-- open interest -->
			<path d="M4 1957H4256M4 2245H4256" stroke="#1e1e22" stroke-width="2" />
			<polyline points={oiLine} fill="none" stroke="#7fdbd3" stroke-width="2" />
			<g fill="none" stroke="#fff" stroke-width="5" stroke-linecap="round">
				<circle cx="34" cy="2201" r="9.500" />
				<path d="M45 2193v11q0 11 9 14" />
				<path d="M60 2203q-8-3-9 3t5 7q3 0 5-1" />
			</g>
			<circle cx="53" cy="2192" r="3.800" fill="#d8432f" />
			<text class="brand" x="71" y="2217" textLength="112">AiCoin</text>

			<!-- price axis -->
			<path d="M4131 240V2245" stroke="#1f1f26" stroke-width="2.500" />
			<g class="label" fill="#787b89">
				{#each prices as p}
					<path d="M4132 {py(p)}h9" stroke="#26262c" stroke-width="2" />
					<text x="4149" y={py(p) + 9.5} textLength="86">{p}.00</text>
				{/each}
				<path d="M4132 2061h9M4132 2167h9" stroke="#26262c" stroke-width="2" />
				<text x="4158" y="2070.500" textLength="68">2.20M</text>
				<text x="4158" y="2176.500" textLength="68">2.15M</text>
			</g>
			<rect x="4130" y="447" width="126" height="347" fill="rgba(62, 139, 248, 0.23)" />
			<rect x="4130" y="819" width="126" height="14" fill="#4269b3" />
			{#each tags as t}
				<rect x="4130" y={t.y} width="126" height={t.h} fill={t.fill} />
				{#if t.tick}<path d="M4130 {t.y + t.h / 2 + 1}h12" stroke="#f0e8ff" stroke-width="2" />{/if}
				<text class="label" x="4149" y={t.y + t.h / 2 + 10} textLength="86" fill="#f4f2ff">{t.text}</text>
			{/each}

			<!-- time axis -->
			<g class="label" fill="#787b89" text-anchor="middle">
				{#each times as t, i}
					<text x={327.6 + i * 216.1} y="2276.500" class:day={t.includes('月')}>{t}</text>
				{/each}
			</g>
			<rect x="2166" y="2244" width="53" height="44" fill="#1d3354" />
			<rect x="1949" y="2244" width="217" height="44" fill="#418bf8" />
			<rect x="2219" y="2244" width="217" height="44" fill="#418bf8" />
			<g class="label" fill="#fff">
				<text x="1960" y="2276" textLength="194">2026-03-25 12:00</text>
				<text x="2230" y="2276" textLength="194">2026-03-25 19:30</text>
			</g>
			<g class="corner" text-anchor="middle">
				<text x="4189" y="2276">筹</text>
				<text x="4233" y="2276">爆</text>
			</g>
		</svg>

		<section class="panel">
			<div class="head">
				<h2>主力挂单</h2>
				<h3>主力吃单</h3>
				<div class="platform">当前平台<i></i></div>
				{@render icon('swap', 27, 25)}
				{@render icon('hex', 27, 28)}
				{@render icon('close', 22)}
			</div>
			<div class="hint">
				<strong>主力看跌</strong>
				<em>若价格处于相对高位，更可信</em>
				<small>*仅供参考，不构成操作建议</small>
			</div>
			<div class="titles"><span>挂买量</span><span>挂单差</span><span>挂卖量</span></div>
			<div class="pairbox">
				<div class="buy"><b>1.03</b><u>亿美元</u></div>
				<div class="sell">
					<div class="diff"><b>-1.41</b><u>亿美元</u></div>
					<div class="sum"><b>2.44</b><u>亿美元</u></div>
				</div>
			</div>
			<div class="titles deal"><span>买单成交</span><span>成交差</span><span>卖单成交</span></div>
			<div class="pairbox">
				<div class="buy filled"><b>7858.2</b><u>万美元</u></div>
				<div class="sell filled">
					<div class="diff"><b>-6305.83</b><u>万美元</u></div>
					<div class="sum"><b>1.42</b><u>亿美元</u></div>
				</div>
			</div>
			<div class="stats">
				<div><span>买均价 {@render tagIcon()}</span><b>2180.27</b></div>
				<div><span>买笔数</span><b>106</b></div>
				<div><span>卖笔数</span><b>142</b></div>
				<div><span>卖均价 {@render tagIcon()}</span><b class="hot">2182.12</b></div>
			</div>
			<div class="foot">
				<span>时间范围<q>03/25 12:00 – 03/25 19:30</q></span>
				<span>价格范围<q>2168.56 – 2215.45</q></span>
			</div>
			<div class="focus"></div>
		</section>
	</main>
</div>

<style>
	:global(body) {
		background: #111;
		overflow: hidden;
	}
	.app {
		--line: #2a2a2a;
		--grey: #b4b4b4;
		zoom: 0.9615;
		box-sizing: border-box;
		width: 4260px;
		height: 2290px;
		display: flex;
		flex-direction: column;
		position: relative;
		background: #111;
		color: var(--grey);
		font-family: Roboto, 'Noto Sans CJK SC', sans-serif;
		box-shadow: inset 2px 0 #2c2c2c, inset -2px 0 #2c2c2c;
		overflow: hidden;
	}
	.icon {
		display: block;
		flex: none;
	}
	.tabs {
		display: flex;
		box-sizing: border-box;
		height: 108px;
		padding: 6px 0 0 20px;
		gap: 3px;
		border-bottom: 2.1px solid var(--line);
	}
	.tab {
		box-sizing: border-box;
		width: 309px;
		height: 84px;
		padding: 9px 0 0 16px;
		border-radius: 10px;
		color: #c4c4c4;
	}
	.tab.active {
		background: #282828;
		color: #dedede;
		padding-top: 10px;
	}
	.pair {
		display: flex;
		align-items: center;
		gap: 20px;
		height: 34px;
		font-size: 26px;
		letter-spacing: -0.1px;
		white-space: nowrap;
	}
	.logo {
		width: 25px;
		height: 25px;
	}
	.active .pair {
		gap: 16px;
		font-weight: 500;
	}
	.active .logo {
		width: 28px;
		height: 28px;
	}
	.quote {
		height: 36px;
		line-height: 36px;
		margin-top: 2px;
		font-size: 28px;
		font-weight: 500;
		letter-spacing: 0.55px;
		white-space: nowrap;
	}
	.quote.up {
		color: #3c8365;
	}
	.quote.down {
		color: #a93337;
	}
	.quote.flat {
		color: #cfcfcf;
	}
	.plus {
		width: 22px;
		height: 22px;
		margin: 31px 0 0 51px;
		stroke: var(--grey);
		stroke-width: 2;
	}
	.periods {
		display: flex;
		align-items: center;
		box-sizing: border-box;
		height: 64px;
		padding: 0 24px 2px 28px;
		border-bottom: 2.1px solid var(--line);
		font-size: 28px;
		white-space: nowrap;
	}
	.menus {
		display: flex;
		align-items: center;
		width: 668px;
		gap: 18px;
	}
	.menu {
		display: flex;
		align-items: center;
		gap: 10px;
	}
	.kline {
		gap: 14px;
	}
	.cycle {
		margin-left: 25px;
		gap: 10px;
	}
	.list {
		display: flex;
		align-items: center;
		justify-content: space-between;
		width: 2625px;
	}
	.current {
		margin: 0 -16px;
		padding: 0 16px;
		height: 46px;
		line-height: 45px;
		border-radius: 8px;
		background: #282828;
		color: #fff;
		font-weight: 500;
	}
	.actions {
		display: flex;
		align-items: center;
		justify-content: space-between;
		width: 447px;
		margin-left: 66px;
	}
	.actions b {
		color: #d8d8d8;
		font-weight: 500;
	}
	.bright {
		color: #fff;
	}
	.layout {
		display: flex;
		align-items: center;
		flex: 1;
		height: 62px;
		margin-left: 28px;
		padding-left: 14px;
		border-left: 2.1px solid var(--line);
		color: #dcdcdc;
		font-size: 24px;
		gap: 9px;
		font-weight: 500;
	}
	.ai {
		width: 106px;
		height: 40px;
		line-height: 38px;
		margin: 2px 14px 0 28px;
		border-radius: 18px 0 18px 0;
		background: linear-gradient(100deg, #62c6c4, #4668f5 50%, #b83df2);
		color: #fff;
		text-align: center;
		font-weight: 600;
	}
	.tools {
		display: flex;
		align-items: center;
		box-sizing: border-box;
		height: 66px;
		padding-left: 10px;
		border-bottom: 2.1px solid var(--line);
		color: #f2f2f2;
	}
	.group {
		display: flex;
		align-items: center;
	}
	.tool {
		display: flex;
		align-items: center;
		justify-content: center;
		width: 64px;
		height: 48px;
	}
	.first .tool:last-child {
		padding-left: 2px;
		width: 62px;
	}
	.aa {
		font: 27px 'Noto Sans', sans-serif;
	}
	.dots {
		width: 38px;
		height: 26px;
	}
	.bar {
		width: 2px;
		height: 26px;
		margin-left: 13px;
		background: #333;
	}
	.marks {
		margin-left: 19px;
	}
	.marks span {
		width: 71.500px;
		text-align: center;
		font-size: 31px;
		line-height: 40px;
		padding-top: 6px;
		color: #d4a83a;
	}
	.marks .pale {
		color: #c9b266;
	}
	.marks .tool {
		width: 66px;
	}
	.second {
		margin-left: 11px;
		margin-right: 19px;
	}
	.pressed {
		width: 48px;
		margin: 0 8px;
		border-radius: 8px;
		background: #2c2c2c;
	}
	.off {
		color: #5a5a5a;
	}

	.chart {
		position: relative;
		flex: 1;
	}
	.canvas {
		display: block;
		width: 4260px;
		height: 2052px;
	}
	.wick {
		stroke-width: 2;
	}
	.up {
		stroke: #50a083;
		fill: none;
	}
	.up .body {
		stroke-width: 2;
	}
	.down {
		stroke: #bf4a43;
	}
	.down .body {
		fill: #bf4a43;
		stroke: none;
	}
	.label {
		font: 24px 'Liberation Sans', 'Noto Sans CJK SC', sans-serif;
	}
	.day {
		font-weight: bold;
	}
	.note {
		font: 68px Inter, 'Noto Sans CJK SC', sans-serif;
	}
	.brand {
		font: bold 31px 'Noto Sans', sans-serif;
		fill: #fff;
	}
	.corner {
		font: bold 27px 'Noto Sans CJK SC', sans-serif;
		fill: #fff;
	}

	.panel {
		position: absolute;
		left: 841px;
		top: 92px;
		box-sizing: border-box;
		width: 1140px;
		height: 762px;
		padding: 0 44px;
		border-radius: 4px;
		background: #242424;
		box-shadow: 0 0 40px rgba(0, 0, 0, 0.5);
		color: #fff;
		white-space: nowrap;
	}
	.head {
		display: flex;
		align-items: center;
		position: relative;
		height: 96px;
		border-bottom: 2.1px solid #393939;
	}
	.head::after {
		content: '';
		position: absolute;
		left: 50px;
		bottom: 0;
		width: 44px;
		height: 6px;
		background: #fff;
	}
	.head h2 {
		margin: 0;
		font-size: 35.500px;
		font-weight: 600;
		line-height: 92px;
	}
	.head h3 {
		margin: 0 auto 0 41px;
		color: #aaa;
		font-size: 31.500px;
		font-weight: 400;
		line-height: 90px;
	}
	.head .icon {
		color: #c4c4c4;
		margin-left: 46px;
	}
	.head .icon:last-child {
		margin-right: 3px;
	}
	.platform {
		display: flex;
		align-items: center;
		gap: 8px;
		padding-bottom: 3px;
		font-size: 28px;
		font-weight: 500;
	}
	.platform i {
		border: 8px solid transparent;
		border-top: 9px solid #fff;
		border-bottom: 0;
	}
	.hint {
		display: flex;
		align-items: center;
		margin-top: 40px;
		height: 48px;
		font-size: 24px;
	}
	.hint strong {
		width: 140px;
		height: 48px;
		line-height: 46px;
		border-radius: 8px;
		background: #b2383e;
		text-align: center;
		font-size: 28px;
		font-weight: 600;
	}
	.hint em {
		margin: -2px 0 0 20px;
		color: #b2383e;
		font-style: normal;
	}
	.hint small {
		margin: -2px 0 0 auto;
		color: #777;
		font-size: 24px;
	}
	.titles {
		display: grid;
		grid-template-columns: 1fr auto 1fr;
		height: 40px;
		line-height: 40px;
		margin-top: 34px;
		color: #777;
		font-size: 28px;
	}
	.titles span:last-child {
		text-align: right;
	}
	.titles.deal {
		margin-top: 37px;
	}
	.pairbox {
		display: flex;
		align-items: center;
		height: 68px;
		margin-top: 11px;
	}
	.buy,
	.sell,
	.diff,
	.sum {
		display: flex;
		align-items: baseline;
		box-sizing: border-box;
	}
	.buy {
		width: 313px;
		height: 48px;
		padding-left: 14px;
		border: 2.1px solid #474747;
		border-right: 0;
		line-height: 47px;
	}
	.sell {
		position: relative;
		width: 739px;
		height: 68px;
		padding-right: 15px;
		border: 2.1px solid #474747;
		line-height: 67px;
	}
	.diff {
		width: 424px;
		justify-content: center;
	}
	.sum {
		flex: 1;
		justify-content: flex-end;
	}
	.pairbox b {
		font-size: 36px;
		font-weight: 500;
		letter-spacing: -0.4px;
	}
	.pairbox u {
		margin-left: 5px;
		color: #ccc;
		font-size: 24px;
		text-decoration: none;
	}
	.buy.filled {
		background: linear-gradient(90deg, #26302e 76%, transparent 76%);
	}
	.sell.filled {
		border-color: #572a2d;
		background: linear-gradient(90deg, transparent 42%, #352526 42%);
	}
	.filled .diff b {
		color: #b2383e;
		font-size: 41px;
	}
	.filled .diff u {
		color: #b2383e;
	}
	.stats {
		display: grid;
		grid-template-columns: 263px 263px 263px 263px;
		height: 140px;
		margin-top: 37px;
		padding-bottom: 6px;
		border-bottom: 2.1px solid #393939;
		line-height: 40px;
	}
	.stats div {
		text-align: center;
	}
	.stats div:first-child {
		text-align: left;
	}
	.stats div:last-child {
		text-align: right;
	}
	.stats span {
		display: block;
		color: #777;
		font-size: 28px;
	}
	.stats b {
		display: block;
		margin: 29px 17px 0;
		font-size: 36px;
		font-weight: 500;
		letter-spacing: -0.2px;
	}
	.stats .hot {
		color: #b2383e;
		font-size: 40px;
	}
	.price-tag {
		width: 37px;
		height: 24px;
		margin-left: 10px;
		vertical-align: -3px;
		fill: none;
		stroke: #777;
		stroke-width: 3;
	}
	.foot {
		display: flex;
		justify-content: space-between;
		line-height: 76px;
		color: #777;
		font-size: 24px;
	}
	.foot q {
		margin-left: 16px;
		quotes: none;
	}
	.focus {
		position: absolute;
		left: 392px;
		top: 359px;
		width: 710px;
		height: 142px;
		border: 6.300px solid #f6bd40;
		border-radius: 12px;
	}
</style>
